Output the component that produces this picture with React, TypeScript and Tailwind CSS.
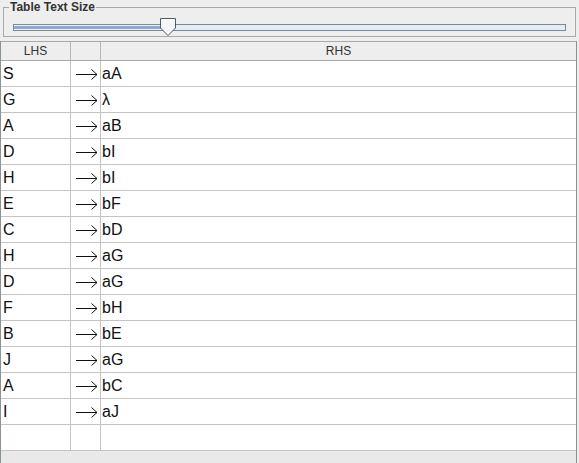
const ROWS: [string, string][] = [
  ["S", "aA"],
  ["G", "λ"],
  ["A", "aB"],
  ["D", "bI"],
  ["H", "bI"],
  ["E", "bF"],
  ["C", "bD"],
  ["H", "aG"],
  ["D", "aG"],
  ["F", "bH"],
  ["B", "bE"],
  ["J", "aG"],
  ["A", "bC"],
  ["I", "aJ"],
  ["", ""],
];

const font = { fontFamily: '"Liberation Sans", Arial, sans-serif' };

function Arrow() {
  return (
    <svg width="22" height="12" viewBox="0 0 22 12" className="text-[#111111]">
      <path d="M0 6.5 H21" stroke="currentColor" strokeWidth="1" />
      <path d="M15.5 1.5 L21 6.5 L15.5 11.5" fill="none" stroke="currentColor" strokeWidth="1" />
    </svg>
  );
}

function Slider() {
  return (
    <div className="relative ml-[9px] mt-[13px] h-[20px]">
      <div className="absolute left-0 right-[9px] top-[5px] h-[7px] border border-[#7a8a99] bg-[#e4ecf5]">
        <div className="h-full w-[150px] border-y border-[#eef3fa] bg-[#8fa8d2]" />
      </div>
      <svg
        className="absolute left-[147px] -top-[1px]"
        width="16"
        height="18"
        viewBox="0 0 16 18"
      >
        <path
          d="M0.5 0.5 H15.5 V10 L8 17.5 L0.5 10 Z"
          fill="#f4f6f9"
          stroke="#4f5a66"
          strokeWidth="1"
        />
        <path d="M1.5 1.5 H14.5" stroke="#ffffff" />
      </svg>
    </div>
  );
}

export default function App() {
  return (
    <div className="w-[579px] h-[463px] bg-[#eeeeee] overflow-hidden" style={font}>
      <fieldset className="mx-[3px] mt-0 h-[37px] w-[573px] border border-[#a8a8a8] px-[0px]">
        <legend
          className="ml-[5px] px-[1px] text-[12px] font-bold leading-[14px] text-[#333333]"
          style={font}
        >
          Table Text Size
        </legend>
        <div className="-mt-[8px]">
          <Slider />
        </div>
      </fieldset>

      <div className="mt-[4px] w-[577px] h-[422px] border-x border-[#8a929a] flex flex-col">
        <div className="grid grid-cols-[70px_30px_1fr] h-[20px] border-t border-b border-[#a9a9a9] bg-[#eeeeee] text-[12px] text-[#333333]">
          <div className="flex items-center justify-center border-r border-[#b8b8b8]">LHS</div>
          <div className="border-r border-[#b8b8b8]" />
          <div className="flex items-center justify-center">RHS</div>
        </div>
        <div className="bg-white">
          {ROWS.map(([lhs, rhs], i) => (
            <div
              key={i}
              className="grid grid-cols-[70px_30px_1fr] h-[26px] border-b border-[#c4c4c4] text-[16px] text-[#111111]"
            >
              <div className="flex items-center pl-[2px] border-r border-[#c4c4c4]">{lhs}</div>
              <div className="flex items-center pl-[5px] border-r border-[#c4c4c4]">
                {lhs ? <Arrow /> : null}
              </div>
              <div className="flex items-center pl-[1px]">{rhs}</div>
            </div>
          ))}
        </div>
        <div className="flex-1 bg-[#e9e9e9]" />
      </div>
    </div>
  );
}
